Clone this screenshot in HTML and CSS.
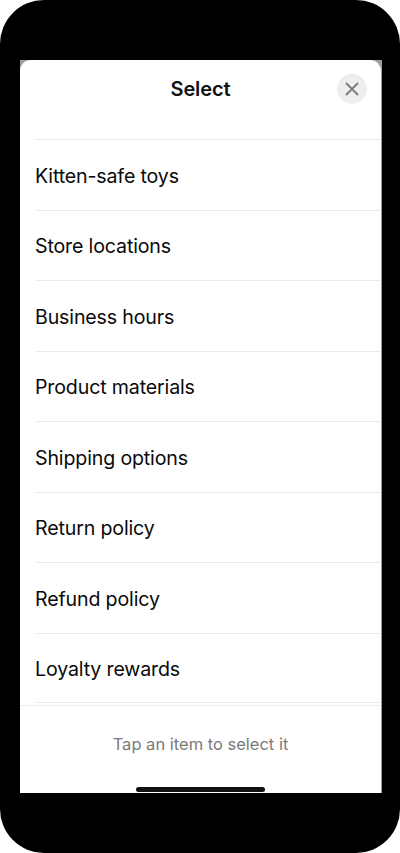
FILE: index.html
```html
<!DOCTYPE html>
<html lang="en">
<head>
<meta charset="utf-8">
<title>Select</title>
<link rel="stylesheet" href="styles.css">
</head>
<body>
<div class="phone">
  <div class="screen">
    <div class="sheet">
      <header class="sheet-header">
        <span></span>
        <h1 class="title">Select</h1>
        <button class="close" aria-label="Close">
          <svg width="14" height="14" viewBox="0 0 14 14"><path d="M1.5 1.5L12.5 12.5M12.5 1.5L1.5 12.5" stroke="#7b7b80" stroke-width="1.9" stroke-linecap="round"/></svg>
        </button>
      </header>
      <ul class="list">
        <li class="item">Kitten-safe toys</li>
        <li class="item">Store locations</li>
        <li class="item">Business hours</li>
        <li class="item">Product materials</li>
        <li class="item">Shipping options</li>
        <li class="item">Return policy</li>
        <li class="item">Refund policy</li>
        <li class="item">Loyalty rewards</li>
      </ul>
      <footer class="sheet-footer">
        <p class="hint">Tap an item to select it</p>
        <div class="home-bar"></div>
      </footer>
    </div>
  </div>
</div>
</body>
</html>
```

FILE: styles.css
```css
* { box-sizing: border-box; }
html, body { margin: 0; padding: 0; background: #ffffff; }
body { font-family: Inter, "Noto Sans", "Liberation Sans", sans-serif; }

.phone {
  width: 400px;
  height: 853px;
  background: #000;
  border-radius: 44px;
  padding: 60px 18px 60px 20px;
}

.screen {
  height: 733px;
  background: #a29f9a;
  display: flex;
  flex-direction: column;
  overflow: hidden;
}

.sheet {
  flex: 1;
  margin-right: 1px;
  background: #fff;
  border-radius: 11px 11px 0 0;
  display: flex;
  flex-direction: column;
  min-height: 0;
}

.sheet-header {
  height: 58px;
  display: grid;
  grid-template-columns: 1fr auto 1fr;
  align-items: center;
  padding: 0 14px;
}

.title {
  margin: 0;
  font-size: 20px;
  font-weight: 600;
  color: #111;
  letter-spacing: -0.1px;
}

.close {
  justify-self: end;
  width: 30px;
  height: 30px;
  border-radius: 50%;
  border: none;
  background: #eeeeef;
  padding: 0;
  display: flex;
  align-items: center;
  justify-content: center;
}

.list {
  list-style: none;
  margin: 21px 0 0 15px;
  padding: 0;
  height: 566px;
  overflow: hidden;
}

.item {
  height: 70.5px;
  border-top: 1px solid #ebebeb;
  display: flex;
  align-items: center;
  padding-top: 2px;
  font-size: 19.6px;
  color: #0a0a0a;
  letter-spacing: -0.15px;
}

.item:last-child {
  border-bottom: 1px solid #ebebeb;
}

.sheet-footer {
  flex: 1;
  border-top: 1px solid #ececec;
  display: flex;
  flex-direction: column;
  align-items: center;
  padding-top: 27px;
}

.hint {
  margin: 0;
  line-height: 22px;
  font-size: 16.5px;
  color: #7a7a7a;
}

.home-bar {
  margin-top: 32px;
  width: 129px;
  height: 5px;
  border-radius: 3px;
  background: #111;
}
```
